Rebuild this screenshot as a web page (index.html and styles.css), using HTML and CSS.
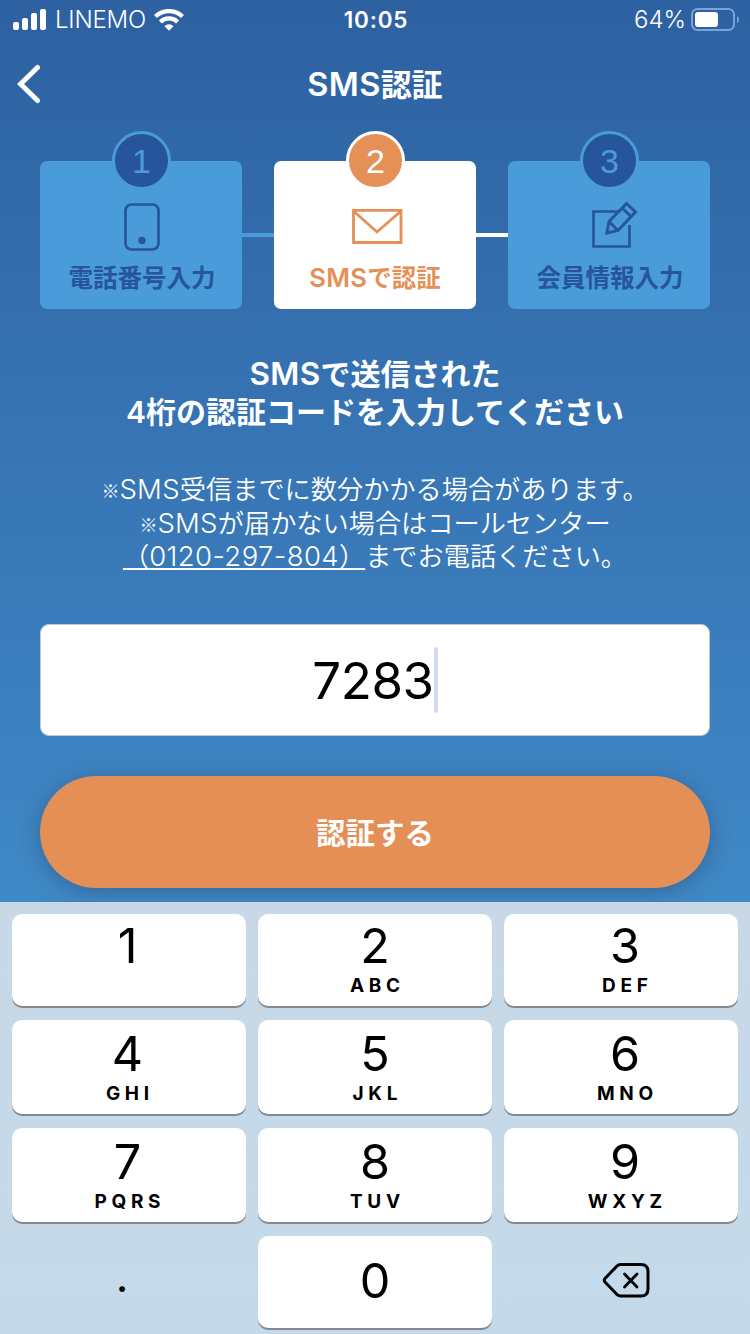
FILE: index.html
```html
<!DOCTYPE html>
<html lang="ja">
<head>
<meta charset="utf-8">
<title>SMS認証</title>
<link rel="stylesheet" href="styles.css">
</head>
<body>
<div class="screen">
  <div class="status">
    <div class="status-left">
      <svg class="signal" width="34" height="22" viewBox="0 0 34 22" fill="#fff"><rect x="0" y="13" width="6" height="8" rx="2"/><rect x="9" y="9" width="6" height="12" rx="2"/><rect x="18" y="4" width="6" height="17" rx="2"/><rect x="27" y="0" width="6" height="21" rx="2"/></svg>
      <span class="carrier">LINEMO</span>
      <svg width="30" height="22" viewBox="0 0 30 22"><g fill="none" stroke="#fff" stroke-width="4.2"><path d="M1.5 7.6a19.2 19.2 0 0 1 27 0"/><path d="M6.4 13a12.2 12.2 0 0 1 17.2 0"/></g><path d="M10.5 17.2a6.4 6.4 0 0 1 9 0L15 21.7z" fill="#fff"/></svg>
    </div>
    <span class="clock">10:05</span>
    <div class="status-right">
      <span class="percent">64%</span>
      <svg width="48" height="24" viewBox="0 0 48 24"><rect x="1" y="1" width="42" height="21" rx="5.5" fill="none" stroke="#7aa3d6" stroke-width="2"/><rect x="4" y="4" width="23" height="15" rx="3" fill="#fff"/><path d="M46 8q2 1 2 3.500T46 15z" fill="#7aa3d6"/></svg>
    </div>
  </div>

  <header class="nav">
    <svg class="back" width="24" height="40" viewBox="0 0 24 40"><path d="M20.500 3.500L3.500 20L20.500 36.500" fill="none" stroke="#fff" stroke-width="5" stroke-linecap="round"/></svg>
    <h1><span class="latin">SMS</span>認証</h1>
  </header>

  <div class="steps">
    <div class="step">
      <span class="num">1</span>
      <svg class="icon" width="60" height="54" viewBox="0 0 60 54"><rect x="14.500" y="4.500" width="33" height="45" rx="6" fill="none" stroke="#27559c" stroke-width="2.700"/><circle cx="31" cy="40.500" r="3.700" fill="#27559c"/></svg>
      <span class="label">電話番号入力</span>
    </div>
    <div class="link"></div>
    <div class="step active">
      <span class="num">2</span>
      <svg class="icon" width="60" height="54" viewBox="0 0 60 54"><path d="M8.500 10.300H56V42.500H8.500zM9 11.500L32 32L55.500 11.500" fill="none" stroke="#e49057" stroke-width="2.800"/></svg>
      <span class="label"><span class="latin">SMS</span>で認証</span>
    </div>
    <div class="link done"></div>
    <div class="step">
      <span class="num">3</span>
      <svg class="icon" width="60" height="54" viewBox="0 0 60 54"><g fill="none" stroke="#27559c" stroke-width="2.700"><path d="M42 11.500H14.500V46.500H50.500V25"/><path d="M27.800 33L30 21.500L47.500 3.500L56.500 12L39 30.500zM30 21.500L39 30.500M43 8L52 16.500" stroke-width="2.900"/></g></svg>
      <span class="label">会員情報入力</span>
    </div>
  </div>

  <h2 class="lead"><span><span class="latin">SMS</span>で送信された</span><span>4桁の認証コードを入力してください</span></h2>

  <div class="notes">
    <p><i>※</i><span class="latin">SMS</span>受信までに数分かかる場合があります。</p>
    <p><i>※</i><span class="latin">SMS</span>が届かない場合はコールセンター</p>
    <p><a>（<b>0120-297-804</b>）</a>までお電話ください。</p>
  </div>

  <div class="field"><span class="code">7283</span><span class="caret"></span></div>
  <div class="submit">認証する</div>

  <div class="keyboard">
    <div class="key left"><b>1</b></div>
    <div class="key"><b>2</b><small>ABC</small></div>
    <div class="key right"><b>3</b><small>DEF</small></div>
    <div class="key tall left"><b>4</b><small>GHI</small></div>
    <div class="key tall"><b>5</b><small>JKL</small></div>
    <div class="key tall right"><b>6</b><small>MNO</small></div>
    <div class="key tall left"><b>7</b><small>PQRS</small></div>
    <div class="key tall"><b>8</b><small>TUV</small></div>
    <div class="key tall right"><b>9</b><small>WXYZ</small></div>
    <div class="plain dot">.</div>
    <div class="key zero"><b>0</b></div>
    <div class="plain"><svg width="48" height="36" viewBox="0 0 48 36" fill="none" stroke="#000" stroke-linecap="round" stroke-linejoin="round"><path d="M18.500 2.500H39Q46 2.500 46 9.500V27Q46 34 39 34H18.500Q16.500 34 15 32.500L3 20Q1.500 18.300 3 16.500L15 4Q16.500 2.500 18.500 2.500z" stroke-width="3"/><path d="M22.500 12L35 25M35 12L22.500 25" stroke-width="2.800"/></svg></div>
  </div>
</div>
</body>
</html>
```

FILE: styles.css
```css
* { box-sizing: border-box; }
body { margin: 0; }
.screen {
  width: 750px; height: 1334px; overflow: hidden;
  display: flex; flex-direction: column;
  font-family: Inter, "Noto Sans CJK JP", sans-serif;
  color: #fff; white-space: nowrap;
  background: linear-gradient(#2d61a1 0, #3774b4 430px, #3f88c6 902px);
}
.latin { font-size: 1.05em; letter-spacing: .3px; }
.status {
  height: 40px; display: grid; grid-template-columns: 1fr auto 1fr;
  align-items: center; padding: 0 11px 0 13px; font-size: 24px; line-height: 40px;
}
.status-left, .status-right { display: flex; align-items: center; height: 40px; }
.status-left { gap: 8px; }
.status-right { justify-content: flex-end; gap: 5px; }
.carrier { font-weight: 300; font-size: 24px; letter-spacing: -.2px; }
.percent { font-weight: 350; }
.clock { font-weight: 600; font-size: 22.5px; letter-spacing: .8px; }
.nav {
  height: 88px; display: grid; grid-template-columns: 24px 1fr 24px; flex-shrink: 0;
  align-items: center; padding: 0 17px;
}
h1 { margin: 0; text-align: center; font-size: 31px; font-weight: 600; line-height: 40px; }
.steps { display: flex; align-items: center; margin: 33px 40px 0; height: 148px; flex-shrink: 0; }
.step {
  position: relative; width: 202px; height: 148px; border-radius: 7px;
  background: #4a9bd9; color: #27559c;
  display: flex; flex-direction: column; align-items: center; padding-top: 39px;
}
.num {
  position: absolute; left: 72px; top: -30px; width: 59px; height: 59px;
  border: 3px solid #4a9bd9; border-radius: 50%; background: #27559c; color: #4a9bd9;
  font: 34px/54px "Liberation Sans", sans-serif; text-align: center;
}
.label { font-size: 24.5px; line-height: 36px; font-weight: 600; margin-top: 6px; padding-left: 2px; }
.active { background: #fff; color: #e49057; }
.active .num { background: #e49057; border-color: #fff; color: #fff; }
.active .label { padding-left: 0; }
.link { width: 32px; height: 4px; background: #4a9bd9; }
.done { background: #fff; }
.lead {
  margin: 46px 0 0; display: flex; flex-direction: column; align-items: center;
  font-size: 30px; line-height: 38px; font-weight: 600;
}
.lead > span { height: 38px; }
.notes { margin-top: 42px; font-size: 26.2px; line-height: 33.5px; font-weight: 350; }
.notes p { margin: 0; height: 33.5px; display: flex; justify-content: center; align-items: center; }
.notes i { font: 500 18px/33.5px "Noto Sans CJK JP", sans-serif; padding-top: 2px; }
.notes a { text-decoration: underline; text-decoration-thickness: 2px; text-underline-offset: 2px; }
.notes b { font-weight: 350; font-size: 27.5px; letter-spacing: .4px; }
.field {
  margin: 50px 40px 0; height: 112px; flex-shrink: 0; border-radius: 9px; border: 1px solid #bccbd9;
  background: #fff; color: #000; display: flex; align-items: center; justify-content: center;
  font-size: 51px; line-height: 66px;
}
.code { letter-spacing: -.4px; padding-top: 2px; }
.caret { width: 4px; height: 66px; border-radius: 2px; background: #d1d9f7; }
.submit {
  margin: 40px 40px 0; height: 112px; flex-shrink: 0; border-radius: 56px; background: #e38f56;
  box-shadow: 0 4px 20px rgba(40,60,90,.4);
  text-align: center; font-size: 29.5px; line-height: 112px; font-weight: 600;
  padding-top: 1px;
}
.keyboard {
  position: relative; margin-top: 14px; height: 432px; flex-shrink: 0; padding: 12px 12px 0;
  background: linear-gradient(#c8d8e6, #c4daea);
  display: grid; grid-template-columns: repeat(3, 234px); column-gap: 12px;
  grid-template-rows: 92px 94px 94px 92px; row-gap: 14px; align-content: start;
  color: #000;
}
.key {
  border-radius: 10px; background: #fff; box-shadow: 0 2px 0 #84898f;
  display: flex; flex-direction: column; align-items: center; padding-top: 2px;
}
.left { padding-right: 3px; }
.right { padding-left: 8px; }
.tall { padding-top: 4px; }
.key b { font-size: 48.5px; line-height: 60px; font-weight: 400; }
.key small { font-size: 19px; line-height: 20px; font-weight: 700; letter-spacing: 4.7px; margin-right: -4.7px; }
.key.zero { padding-top: 15px; }
.plain { display: flex; align-items: center; justify-content: center; padding: 0 0 4px 10px; }
.dot { font-size: 44px; padding: 0 14px 11px 0; }
```
